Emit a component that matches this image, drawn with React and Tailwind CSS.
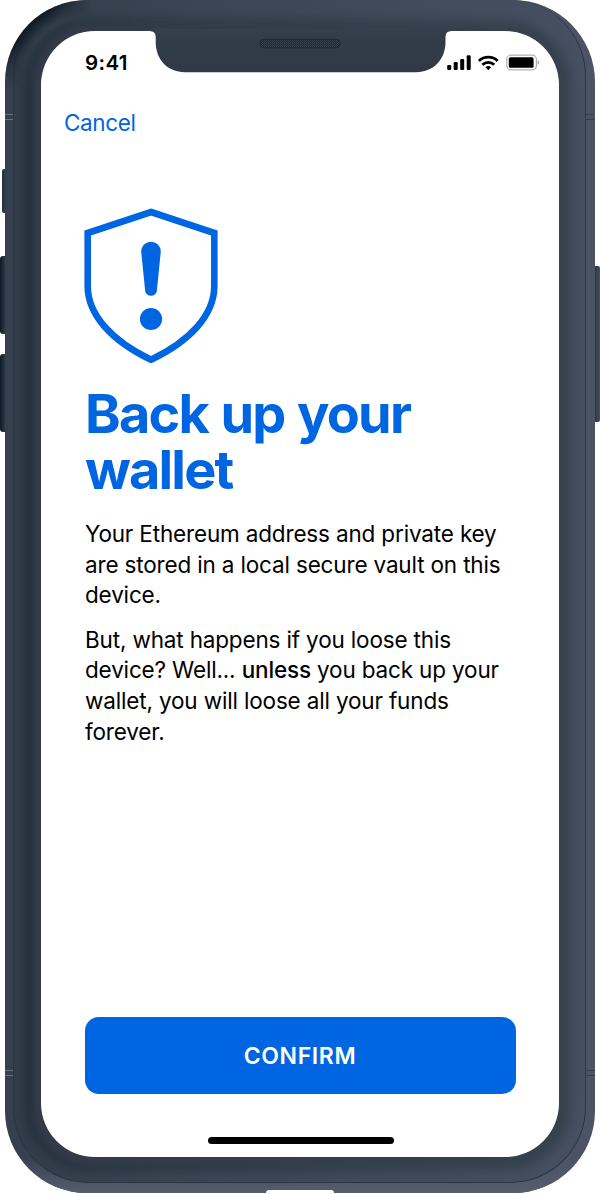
import React from "react";

const BLUE = "#0065e0";

function Shield() {
  return (
    <svg width="134" height="156" viewBox="84 208 134 156" fill="none" aria-hidden="true" className="block">
      <path d="M151 212L214.300 233V286C214.300 315 190 341 151 359.700C112 341 87.700 315 87.700 286V233Z" stroke={BLUE} strokeWidth="6.600" />
      <path d="M141.200 251.500a9.800 9.800 0 0 1 19.600 0L156.800 291.200a6 6 0 0 1-11.600 0Z" fill={BLUE} />
      <circle cx="151" cy="319" r="11.100" fill={BLUE} />
    </svg>
  );
}

function StatusIcons() {
  return (
    <svg width="94" height="18" viewBox="446 54 94 18" aria-hidden="true" className="block">
      <rect x="447.200" y="65" width="4" height="5" rx="1.200" />
      <rect x="453.700" y="62" width="4" height="8" rx="1.200" />
      <rect x="460.200" y="59" width="4" height="11" rx="1.200" />
      <rect x="466.700" y="55.200" width="4" height="14.800" rx="1.200" />
      <g fill="none" stroke="#000" strokeWidth="2.800">
        <path d="M478.900 60.900a13.800 13.800 0 0 1 18.800 0" />
        <path d="M482.400 64.700a8.700 8.700 0 0 1 11.800 0" />
      </g>
      <path d="M485.500 67.300a4.200 4.200 0 0 1 5.600 0L488.300 70.200Z" />
      <rect x="506.800" y="55.200" width="29.600" height="14.600" rx="4" fill="#fff" stroke="#b0b0b0" strokeWidth="1.200" />
      <rect x="508.800" y="57.300" width="24.800" height="10.500" rx="1.600" />
      <path d="M537.600 60.200q1.700.6 1.700 2.300t-1.700 2.300Z" fill="#aaa" />
    </svg>
  );
}

function Notch() {
  return (
    <svg width="304" height="44" viewBox="148 29 304 44" aria-hidden="true" className="-mt-[2px] ml-[107px] block">
      <defs>
        <linearGradient id="notch" x1="0" y1="0" x2="0" y2="1">
          <stop offset="0" stopColor="#34404b" />
          <stop offset="0.3" stopColor="#323b48" />
          <stop offset="1" stopColor="#313947" />
        </linearGradient>
        <pattern id="mesh" width="2" height="2" patternUnits="userSpaceOnUse">
          <rect width="2" height="2" fill="#1c2530" />
          <rect width="1" height="1" fill="#3c4654" />
          <rect x="1" y="1" width="1" height="1" fill="#344050" />
        </pattern>
      </defs>
      <path d="M148 29V31H149.500Q155.700 31 155.700 37V42C155.700 59 167 72.200 185 72.200H416C434 72.200 445.500 59 445.500 42V37Q445.500 31 451.500 31H452V29Z" fill="url(#notch)" />
      <rect x="260" y="39.300" width="80" height="8.600" rx="4.300" fill="url(#mesh)" stroke="#202a36" strokeWidth="1.200" />
    </svg>
  );
}

function AntennaBands({ className }) {
  return (
    <div className={"z-10 flex w-[8px] flex-col justify-between pb-[117px] pt-[114px] [grid-area:1/1] " + className}>
      <span className="h-[6px] border-y border-current" />
      <span className="h-[6px] border-y border-current" />
    </div>
  );
}

export default function App() {
  return (
    <div className="flex h-[1194px] w-[600px] overflow-hidden bg-white font-['Inter','Liberation_Sans',sans-serif]">
      <div className="flex w-[5px] flex-col items-end pt-[169px]">
        <div className="h-[44px] w-[3px] rounded-l-[2px] bg-[#2b3643]" />
        <div className="mt-[43px] h-[78px] w-full rounded-l-[3px] bg-linear-to-r from-[#0e1b26] to-[#2c3845]" />
        <div className="mt-[20px] h-[78px] w-full rounded-l-[3px] bg-linear-to-r from-[#0e1b26] to-[#2c3845]" />
      </div>

      <div className="grid h-[1193px] w-[590px] overflow-hidden rounded-[82px] bg-linear-to-r from-[#353f4e] to-[#4b5365]">
        <div className="bg-linear-to-b from-transparent from-97% to-[#565e6d] [grid-area:1/1]" />
        <div className="mb-[10px] ml-[8px] mr-[9px] rounded-[76px] border border-t-0 border-[#2b3543] bg-linear-to-r from-[#323d4a] via-[#3b4452] via-30% to-[#465062] [grid-area:1/1]" />
        <div className="mb-[21px] ml-[17px] mr-[22px] mt-[19px] rounded-[68px] bg-linear-to-r from-[#26323e] via-[#2d3945] via-25% to-[#3d4856] blur-[5px] [grid-area:1/1]" />
        <div className="mb-[28px] ml-[29px] mr-[28px] mt-[25px] rounded-[58px] bg-linear-to-r from-[#343b49] via-[#333d49] via-40% to-[#35424e] blur-[3px] [grid-area:1/1]" />
        <div className="z-10 size-[86px] bg-[radial-gradient(circle_at_82px_82px,transparent_66px,#07111bcc_81px)] [mask-image:radial-gradient(circle_at_24px_24px,black_20px,transparent_66px)] [grid-area:1/1]" />
        <AntennaBands className="justify-self-start text-[#6b737e]" />
        <AntennaBands className="mr-px justify-self-end text-[#333e4c]" />

        <main className="z-10 ml-[36px] mt-[31px] grid h-[1126px] w-[518px] rounded-[54px] bg-white [grid-area:1/1]">
          <div className="[grid-area:1/1]"><Notch /></div>
          <div className="flex flex-col [grid-area:1/1]">
            <header className="flex items-start justify-between pl-[44px] pr-[19px] pt-[18px]">
              <span className="text-[20.500px] font-semibold leading-[28px] tracking-[0.400px] text-black">9:41</span>
              <span className="pt-[5px]"><StatusIcons /></span>
            </header>
            <button className="ml-[23px] mt-[31px] w-fit text-left text-[22.500px] leading-[30px] tracking-[-0.350px] text-[#0065e0]">Cancel</button>

            <section className="mt-[70px] flex flex-col pl-[43px]">
              <Shield />
              <h1 className="mt-[22px] whitespace-nowrap pl-px text-[54px] font-bold leading-[56px] tracking-[-1.800px] text-[#0065e0] [word-spacing:1.500px]">
                Back up your<br />wallet
              </h1>
              <div className="mt-[21px] flex flex-col gap-[14px] whitespace-nowrap pl-px text-[22.500px] leading-[30.600px] tracking-[-0.160px] text-black">
                <p>
                  Your Ethereum address and private key<br />
                  are stored in a local secure vault on this<br />
                  device.
                </p>
                <p>
                  But, what happens if you loose this<br />
                  device? Well... <strong className="font-medium">unless</strong> you back up your<br />
                  wallet, you will loose all your funds<br />
                  forever.
                </p>
              </div>
            </section>

            <footer className="mt-auto flex flex-col items-center gap-[43px] pb-[13px]">
              <button className="h-[77px] w-[431px] rounded-[14px] bg-[#0065e0] text-[23px] font-semibold leading-[30px] tracking-[0.600px] text-white">CONFIRM</button>
              <div className="ml-[2px] h-[7px] w-[186px] rounded-full bg-black" />
            </footer>
          </div>
        </main>
        <div className="z-10 h-[3px] w-[68px] self-end justify-self-center rounded-t-[10px] bg-white [grid-area:1/1]" />
      </div>

      <div className="w-[5px] pt-[266px]">
        <div className="h-[156px] rounded-r-[2px] bg-linear-to-r from-[#2e3947] to-[#465062]" />
      </div>
    </div>
  );
}
